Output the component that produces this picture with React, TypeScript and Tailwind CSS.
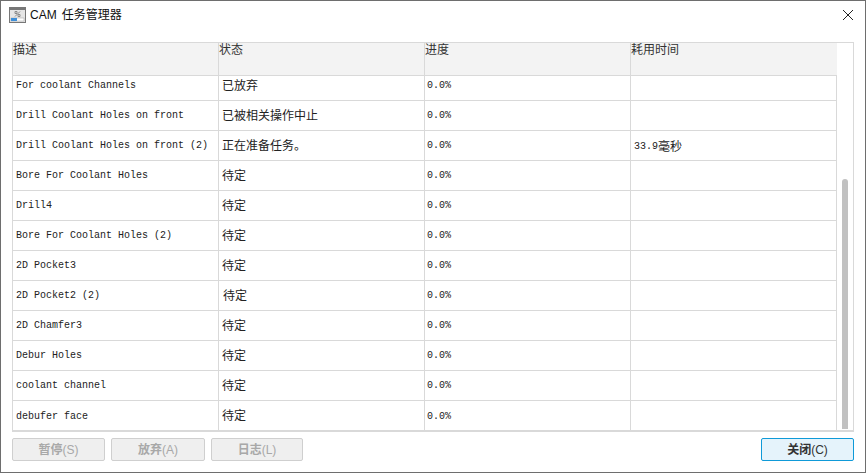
import React from 'react';

const mono = 'font-["Liberation_Mono",monospace] text-[10px]';
const cjk = 'font-["Liberation_Sans","Noto_Sans_CJK_SC",sans-serif]';

const rows = [
	{ name: 'For coolant Channels', status: '已放弃', time: '', h: 'h-[25px]', cell: 'pb-[5px]', pad: 'pl-[3px]' },
	{ name: 'Drill Coolant Holes on front', status: '已被相关操作中止', time: '', h: 'h-[30px]', cell: '', pad: 'pl-[3px]' },
	{ name: 'Drill Coolant Holes on front (2)', status: '正在准备任务。', time: '33.9', h: 'h-[30px]', cell: '', pad: 'pl-[3px]' },
	{ name: 'Bore For Coolant Holes', status: '待定', time: '', h: 'h-[30px]', cell: '', pad: 'pl-[3px]' },
	{ name: 'Drill4', status: '待定', time: '', h: 'h-[30px]', cell: '', pad: 'pl-[3px]' },
	{ name: 'Bore For Coolant Holes (2)', status: '待定', time: '', h: 'h-[30px]', cell: '', pad: 'pl-[3px]' },
	{ name: '2D Pocket3', status: '待定', time: '', h: 'h-[30px]', cell: '', pad: 'pl-[3px]' },
	{ name: '2D Pocket2 (2)', status: '待定', time: '', h: 'h-[30px]', cell: '', pad: 'pl-[4px]' },
	{ name: '2D Chamfer3', status: '待定', time: '', h: 'h-[30px]', cell: '', pad: 'pl-[3px]' },
	{ name: 'Debur Holes', status: '待定', time: '', h: 'h-[30px]', cell: '', pad: 'pl-[3px]' },
	{ name: 'coolant channel', status: '待定', time: '', h: 'h-[30px]', cell: '', pad: 'pl-[3px]' },
	{ name: 'debufer face', status: '待定', time: '', h: 'h-[31px]', cell: 'pb-[1px]', pad: 'pl-[3px]' },
];

const AppIcon = () => (
	<svg width="17" height="16" viewBox="0 0 17 16" className="shrink-0">
		<rect x="0.5" y="0.5" width="16" height="15" fill="#e6e6e6" stroke="#777777" />
		<rect x="1" y="1" width="15" height="2" fill="#777777" />
		<path d="M6 9.5L11 4.5M6 4.5h2v2h-2zM9 7.5h2v2h-2z" stroke="#8a8a8a" strokeWidth="1" fill="none" />
		<rect x="2" y="11" width="13" height="3" fill="#ffffff" stroke="#a0a0a0" strokeWidth="0.5" />
		<rect x="2" y="11" width="6" height="3" fill="#3f8fd8" />
	</svg>
);

const Button = ({ label, hot, width }: { label: string, hot: string, width: string }) => (
	<div className={`${width} h-[23px] flex items-center justify-center bg-[#efefef] border border-[#cfcfcf] rounded-[2px] text-[#a8a8a8] text-[12px] ${cjk}`}>
		<span className="font-bold">{label}</span>{hot}
	</div>
);

export default function App() {
	return <div className="w-[866px] h-[473px] bg-white overflow-hidden border border-[#6e6e6e] flex flex-col">
		<div className="h-[28px] flex items-center pl-[8px] pr-[10px] shrink-0">
			<AppIcon />
			<div className={`ml-[4px] text-[12px] text-[#111] flex-1 flex gap-[5px] ${cjk}`}>
				<span>CAM</span>
				<span>任务管理器</span>
			</div>
			<svg width="12" height="12" viewBox="0 0 12 12" className="mr-[1px]">
				<path d="M1 1L11 11M11 1L1 11" stroke="#222" strokeWidth="1" />
			</svg>
		</div>
		<div className="h-[13px] shrink-0" />
		<div className="ml-[11px] w-[842px] h-[390px] border border-[#d9d9d9] border-b-2 flex shrink-0">
			<div className="w-[824px] flex flex-col">
				<div className={`h-[33px] flex bg-[#f3f3f3] border-b border-[#d9d9d9] text-[12px] leading-[14px] text-[#333] shrink-0 ${cjk}`}>
					<div className="w-[205px]">描述</div>
					<div className="w-[206px] border-l border-[#d9d9d9]">状态</div>
					<div className="w-[206px] border-l border-[#d9d9d9]">进度</div>
					<div className="w-[207px] border-l border-[#d9d9d9]">耗用时间</div>
				</div>
				{rows.map(r => (
					<div key={r.name} className={`${r.h} flex items-center border-b border-[#d9d9d9] last:border-b-0 text-[#222] shrink-0`}>
						<div className={`w-[205px] h-full flex items-center pl-[3px] whitespace-pre ${mono} ${r.cell}`}>{r.name}</div>
						<div className={`w-[206px] h-full flex items-center ${r.pad} border-l border-[#d9d9d9] text-[12px] ${cjk} ${r.cell}`}>{r.status}</div>
						<div className={`w-[206px] h-full flex items-center pl-[2px] border-l border-[#d9d9d9] ${mono} ${r.cell}`}>0.0%</div>
						<div className={`w-[207px] h-full flex items-center pl-[3px] pt-[2px] border-l border-r border-[#d9d9d9] ${r.cell}`}>
							{r.time && <>
								<span className={mono}>{r.time}</span>
								<span className={`text-[12px] ${cjk}`}>毫秒</span>
							</>}
						</div>
					</div>
				))}
			</div>
			<div className="flex-1 flex flex-col justify-end items-center pb-[1px]">
				<div className="w-[6px] h-[250px] bg-[#c1c1c1] rounded-t-[3px]" />
			</div>
		</div>
		<div className="flex items-center pl-[11px] pr-[11px] mt-[6px]">
			<Button label="暂停" hot="(S)" width="w-[93px]" />
			<div className="w-[6px]" />
			<Button label="放弃" hot="(A)" width="w-[94px]" />
			<div className="w-[6px]" />
			<Button label="日志" hot="(L)" width="w-[92px]" />
			<div className="flex-1" />
			<div className={`w-[93px] h-[23px] flex items-center justify-center bg-[#e5f3fb] border border-[#0f9ad8] rounded-[2px] text-[#333] text-[12px] ${cjk}`}>
				<span className="font-bold">关闭</span>(C)
			</div>
		</div>
	</div>
}
